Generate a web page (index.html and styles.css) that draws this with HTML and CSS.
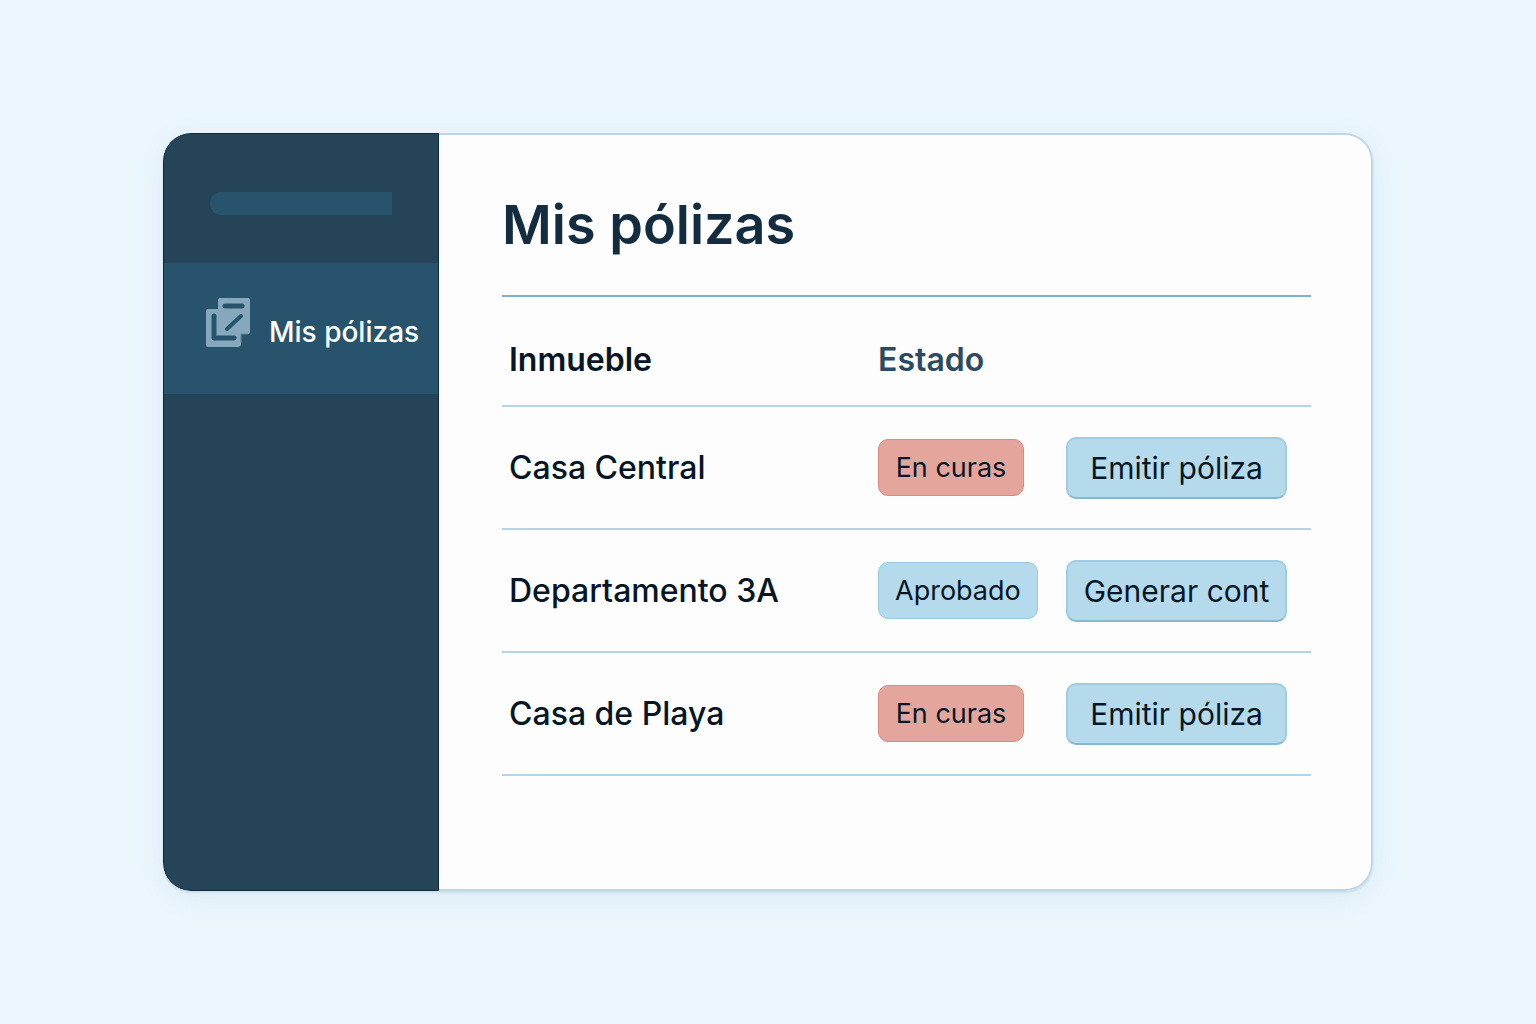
FILE: index.html
```html
<!DOCTYPE html>
<html lang="es">

<head>
  <meta charset="UTF-8">
  <meta name="viewport" content="width=device-width, initial-scale=1.0">
  <title>Mis pólizas</title>
  <link rel="stylesheet" href="styles.css">
</head>

<body>
  <div class="card">
    <aside class="sidebar">
      <div class="brand"></div>
      <nav>
        <a class="nav-item" href="#">
          <svg class="nav-icon" viewBox="0 0 46 51" aria-hidden="true">
            <path class="sheet" d="M15 1H43Q45 1 45 3V35Q45 37 43 37H36V47Q36 50 33 50H3Q1 50 1 48V14Q1 12 3 12H13V3Q13 1 15 1Z" />
            <path class="mark" d="M20 9H37" />
            <path class="mark" d="M9 19V41H29" />
            <path class="slash" d="M36 19L22 32" />
            <path class="edge" d="M36 46V37H43" />
          </svg>
          <span class="nav-label">Mis pólizas</span>
        </a>
      </nav>
    </aside>

    <main class="content">
      <h1>Mis pólizas</h1>

      <table>
        <thead>
          <tr>
            <th class="col-name" scope="col">Inmueble</th>
            <th class="col-state" scope="col">Estado</th>
            <td class="col-action"></td>
          </tr>
        </thead>
        <tbody>
          <tr>
            <td class="name">Casa Central</td>
            <td><span class="badge badge-pending">En curas</span></td>
            <td><button type="button">Emitir póliza</button></td>
          </tr>
          <tr>
            <td class="name">Departamento 3A</td>
            <td><span class="badge badge-approved">Aprobado</span></td>
            <td><button type="button">Generar cont</button></td>
          </tr>
          <tr>
            <td class="name">Casa de Playa</td>
            <td><span class="badge badge-pending">En curas</span></td>
            <td><button type="button">Emitir póliza</button></td>
          </tr>
        </tbody>
      </table>
    </main>
  </div>
</body>

</html>
```

FILE: styles.css
```css
* {
  box-sizing: border-box;
}

body {
  display: flex;
  min-height: 100vh;
  margin: 0;
  padding: 133px 163px;
  background: #ebf6fd;
  color: #061626;
  font-family: Inter, "Liberation Sans", sans-serif;
}

.card {
  display: flex;
  flex: 1;
  overflow: hidden;
  border-radius: 28px;
  background: #fdfdfe;
  box-shadow: inset 0 0 0 2px #bed6e6, 0 2px 2px #cddfea, 0 6px 24px #dcebf5;
}

.sidebar {
  width: 276px;
  background: #264457;
  border: 1px solid #0c2a3e;
  border-radius: 28px 0 0 28px;
}

.brand {
  height: 23px;
  margin: 58px 46px 48px;
  border-radius: 12px 0 0 12px;
  background: #27546c;
}

.nav-item {
  display: flex;
  align-items: center;
  gap: 18px;
  height: 131px;
  padding-left: 41px;
  background: #27546c;
  color: #fff;
  font-size: 28px;
  font-weight: 500;
  text-decoration: none;
  white-space: nowrap;
}

.nav-icon {
  width: 46px;
  height: 51px;
  margin-bottom: 12px;
  fill: none;
}

.nav-label {
  padding-top: 6px;
}

.sheet {
  fill: #86a8bd;
}

.mark,
.slash {
  stroke: #27546c;
  stroke-width: 5;
  stroke-linecap: round;
  stroke-linejoin: round;
}

.slash {
  stroke-width: 4;
}

.edge {
  stroke: #5d869d;
  stroke-width: 1;
}

.content {
  flex: 1;
  padding: 58px 62px 58px 63px;
}

h1 {
  margin: 0;
  padding-bottom: 36px;
  border-bottom: 2px solid #83afcb;
  color: #132c40;
  font-size: 54px;
  font-weight: 600;
  line-height: 68px;
}

table {
  width: 100%;
  border-collapse: collapse;
  table-layout: fixed;
}

tr {
  height: 123px;
  border-bottom: 2px solid #b3d5e6;
}

thead tr {
  height: 109px;
}

th,
td {
  padding: 0;
  text-align: left;
}

.col-name {
  width: 376px;
  padding-left: 7px;
}

.col-state {
  width: 188px;
  color: #2b4b62;
}

th {
  padding-top: 16px;
  font-size: 32px;
  font-weight: 600;
}

.name {
  padding-left: 7px;
  font-size: 32px;
  font-weight: 500;
}

.badge {
  display: inline-block;
  min-width: 146px;
  padding: 0 16px;
  border: 1px solid;
  border-radius: 10px;
  font-size: 27px;
  line-height: 55px;
  text-align: center;
}

.badge-pending {
  background: #e4a69c;
  border-color: #dc8b80;
}

.badge-approved {
  background: #b4daeb;
  border-color: #9bc9df;
}

button {
  width: 221px;
  height: 62px;
  padding: 0;
  border: 2px solid #a0cce1;
  border-bottom-color: #88b8cf;
  border-radius: 10px;
  background: #b4daec;
  color: inherit;
  font: inherit;
  font-size: 30px;
  cursor: pointer;
}

button:hover {
  background: #a6d1e6;
}
```
